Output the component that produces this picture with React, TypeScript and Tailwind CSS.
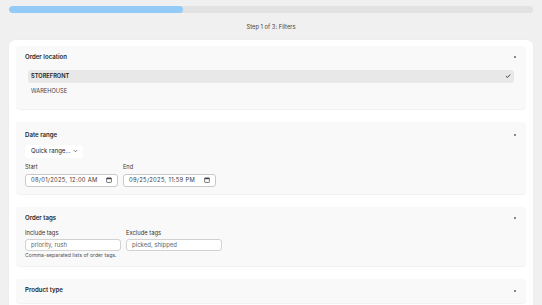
import React from 'react';

function Section({ title, className, children }: { title: string; className?: string; children?: React.ReactNode }) {
  return (
    <section className={`rounded-[4px] bg-[#f9f9f9] shadow-[0_1px_1px_rgba(0,0,0,0.06)] px-[9px] ${className ?? 'pt-[8px] pb-[9px]'}`}>
      <div className="flex items-center justify-between h-[7px]">
        <h3 className="text-[6.1px] font-semibold text-[#1f1f1f] leading-none">{title}</h3>
        <span className="w-[2px] h-[2px] bg-[#888] mr-[1px]" />
      </div>
      {children}
    </section>
  );
}

function CalendarIcon() {
  return (
    <svg width="6" height="6" viewBox="0 0 10 10" className="shrink-0">
      <rect x="1" y="1.5" width="8" height="7.5" rx="1" fill="none" stroke="#444" strokeWidth="1.2" />
      <rect x="1" y="1.5" width="8" height="2.2" fill="#444" />
    </svg>
  );
}

function DateBox({ value }: { value: string }) {
  return (
    <div className="w-[93px] h-[13px] bg-white border border-[#c9c9c9] rounded-[3px] flex items-center justify-between px-[5px]">
      <span className="text-[5.8px] text-[#3a3a3a] leading-none tracking-[0.3px]">{value}</span>
      <CalendarIcon />
    </div>
  );
}

export default function App() {
  return (
    <div className="w-[542px] h-[305px] overflow-hidden bg-[#f0f0f0] font-['Inter','Liberation_Sans',sans-serif]">
      <div className="px-[9px] pt-[6px]">
        <div className="h-[7px] rounded-full bg-[#e2e2e2] overflow-hidden">
          <div className="h-full w-[33.3%] bg-[#92cbf8] rounded-full" />
        </div>
        <p className="text-center text-[5.8px] text-[#444] leading-none mt-[11px]">Step 1 of 3: Filters</p>

        <div className="mt-[10px] bg-white rounded-[6px] px-[7px] pt-[6px] pb-[20px] flex flex-col gap-[13px] shadow-[0_0_1px_rgba(0,0,0,0.08)]">
          <Section title="Order location" className="pt-[8px] pb-[11px]">
            <ul className="mt-[9px] px-[3px] flex flex-col gap-[2px]">
              <li className="h-[13px] rounded-[3px] bg-[#e8e8e8] flex items-center justify-between px-[3px]">
                <span className="text-[5.7px] font-semibold text-[#222] leading-none">STOREFRONT</span>
                <svg width="6" height="6" viewBox="0 0 10 10">
                  <path d="M1.5 5.2 L4 7.6 L8.6 2.4" fill="none" stroke="#333" strokeWidth="1.5" />
                </svg>
              </li>
              <li className="h-[13px] flex items-center px-[3px]">
                <span className="text-[5.7px] text-[#444] leading-none">WAREHOUSE</span>
              </li>
            </ul>
          </Section>

          <Section title="Date range" className="pt-[10px] pb-[7px]">
            <div className="mt-[6px] w-[58px] h-[13px] bg-white rounded-[3px] flex items-center justify-between pl-[6px] pr-[5px]">
              <span className="text-[6px] text-[#222] leading-none">Quick range...</span>
              <svg width="5" height="4" viewBox="0 0 10 8">
                <path d="M1.5 2 L5 5.5 L8.5 2" fill="none" stroke="#444" strokeWidth="1.4" />
              </svg>
            </div>
            <div className="mt-[7px] flex gap-[5px]">
              <div>
                <div className="text-[5.6px] text-[#333] leading-none h-[6px] mb-[3px]">Start</div>
                <DateBox value="08/01/2025, 12:00 AM" />
              </div>
              <div>
                <div className="text-[5.6px] text-[#333] leading-none h-[6px] mb-[3px]">End</div>
                <DateBox value="09/25/2025, 11:59 PM" />
              </div>
            </div>
          </Section>

          <Section title="Order tags" className="pt-[8px] pb-[8px]">
            <div className="mt-[8px] flex gap-[5px]">
              <div>
                <div className="text-[5.8px] text-[#333] leading-none h-[6px] mb-[3px]">Include tags</div>
                <div className="w-[96px] h-[12px] bg-white border border-[#d2d2d2] rounded-[3px] flex items-center px-[5px]">
                  <span className="text-[6px] text-[#666] leading-none">priority, rush</span>
                </div>
              </div>
              <div>
                <div className="text-[5.8px] text-[#333] leading-none h-[6px] mb-[3px]">Exclude tags</div>
                <div className="w-[96px] h-[12px] bg-white border border-[#d2d2d2] rounded-[3px] flex items-center px-[5px]">
                  <span className="text-[6px] text-[#666] leading-none">picked, shipped</span>
                </div>
              </div>
            </div>
            <p className="mt-[2px] text-[5.2px] text-[#555] leading-none">Comma-separated lists of order tags.</p>
          </Section>

          <Section title="Product type" className="pt-[8px] pb-[9px]" />
        </div>
      </div>
    </div>
  );
}
